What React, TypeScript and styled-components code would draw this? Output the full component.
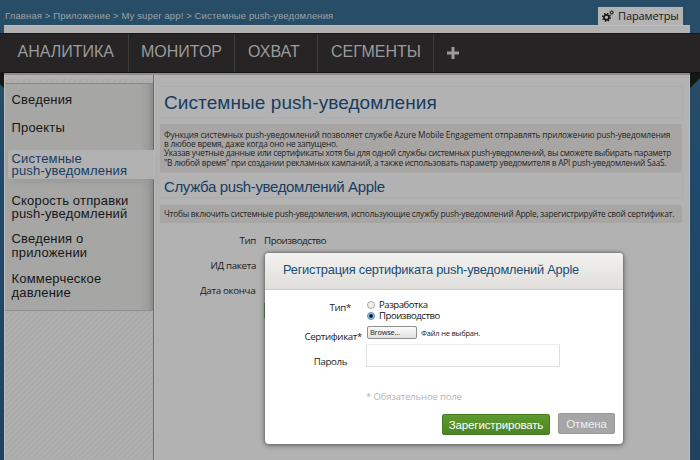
import React from 'react';
import styled, { createGlobalStyle, css } from 'styled-components';

const Global = createGlobalStyle`
  * { box-sizing: border-box; }
  html, body { margin: 0; padding: 0; }
  body { width: 700px; height: 460px; overflow: hidden; background: #284c67; }
`;

const sans = css`font-family: 'Liberation Sans', Arial, sans-serif;`;
const human = css`font-family: 'Open Sans', 'Noto Sans', sans-serif;`;
const hatch = css`
  background: repeating-linear-gradient(135deg, #afafaf 0 2px, #a6a6a6 3px, #afafaf 4px);
`;

const Page = styled.div`
  ${sans}
  position: relative;
  width: 700px;
  height: 460px;
  overflow: hidden;
  display: flex;
  flex-direction: column;
  background: linear-gradient(#284d67, #274c66 90px, #20496b 170px, #21425e);
`;

const TopBar = styled.header`
  height: 25px;
  flex: none;
  display: flex;
  justify-content: space-between;
  padding: 0 17px 0 5px;
`;

const Breadcrumb = styled.nav`
  padding-top: 10px;
  font-size: 9.5px;
  line-height: 12px;
  letter-spacing: 0.13px;
  color: #9aa3a8;
  white-space: nowrap;
`;

const SettingsTab = styled.div`
  ${human}
  display: flex;
  align-items: center;
  gap: 4px;
  width: 85px;
  height: 18px;
  margin-top: 7px;
  padding-left: 4px;
  background: #b3b3b3;
  color: #161616;
  font-size: 11px;
  line-height: 18px;
  letter-spacing: -0.1px;
  white-space: nowrap;
`;

const Strip = styled.div`
  height: 8px;
  flex: none;
  margin: 0 10px 0 4px;
  background: #b2b2b2;
  border-top: 1px solid #bdbdbd;
`;

const MainNav = styled.nav`
  display: flex;
  flex: none;
  height: 40px;
  background: #262425;
  border-top: 1px solid #1b1a1a;
  border-bottom: 1px solid #141414;
`;

const NavItem = styled.a<{ $width: number; $pad: number }>`
  width: ${p => p.$width}px;
  padding-left: ${p => p.$pad}px;
  border-right: 1px solid #3c3c3c;
  color: #9b9b9b;
  font-size: 16px;
  line-height: 36px;
  white-space: nowrap;
`;

const AddItem = styled.div`
  padding: 13px 0 0 13px;
  svg { display: block; }
`;

const Body = styled.div`
  flex: 1;
  display: flex;
`;

const LeftEdge = styled.div`
  width: 4px;
  flex: none;
  svg { display: block; }
`;
const RightEdge = styled.div`
  width: 10px;
  flex: none;
  svg { display: block; }
`;

const Sheet = styled.div`
  flex: 1;
  min-width: 0;
  display: flex;
  background: #b2b2b2;
  border-top: 2px solid #8d8d8d;
`;

const Sidebar = styled.aside`
  width: 150px;
  flex: none;
  padding-top: 4px;
  display: flex;
  flex-direction: column;
  border-left: 1px solid #bcbcba;
  border-right: 1px solid #6b6b6b;
`;

const HatchStrip = styled.div`
  height: 4px;
  ${hatch}
`;

const Menu = styled.ul`
  list-style: none;
  margin: 0;
  padding: 9px 0 0;
  height: 228px;
  background: linear-gradient(90deg, #a6a6a4 135px, #9d9d9b 143px, #8b8b8a);
  border-top: 1px solid #888;
  border-bottom: 1px solid #8e8e8e;
`;

const MenuItem = styled.li<{ $gap: number; $lead: number; $active?: boolean }>`
  position: relative;
  margin-top: ${p => p.$gap}px;
  padding-left: 6.5px;
  color: #171717;
  font-size: 13px;
  line-height: ${p => p.$lead}px;
  letter-spacing: 0.18px;
  white-space: pre;
  ${p => p.$active && css`
    margin-left: 3px;
    margin-right: -1px;
    padding: 3px 0 3px 3.5px;
    color: #173c61;
    background: #b1b1b1;
    border-radius: 3px 0 0 3px;
    box-shadow: 0 5px 10px -4px #919191;
  `}
`;

const HatchFill = styled.div`
  flex: 1;
  ${hatch}
`;

const Content = styled.main`
  flex: 1;
  min-width: 0;
  padding: 11px 6px 0 5px;
  border-left: 1px solid #bbb;
  border-right: 1px solid #bebebe;
`;

const Heading = styled.h1<{ $h: number; $size: number; $track: number; $lh: number }>`
  margin: 0;
  height: ${p => p.$h}px;
  padding-left: 4px;
  border: 1px solid #adadad;
  border-left: 0;
  font-weight: 400;
  font-size: ${p => p.$size}px;
  line-height: ${p => p.$lh}px;
  letter-spacing: ${p => p.$track}px;
  color: #163c62;
  white-space: nowrap;
`;

const Note = styled.div<{ $h: number; $top: number; $pad: number }>`
  ${human}
  height: ${p => p.$h}px;
  margin-top: ${p => p.$top}px;
  margin-right: 1px;
  padding: ${p => p.$pad}px 0 0 4px;
  background: #a7a6a5;
  color: #1f1f1f;
`;

const Line = styled.div<{ $track: number; $lh: number }>`
  font-size: 8.3px;
  line-height: ${p => p.$lh}px;
  letter-spacing: ${p => p.$track}px;
  white-space: nowrap;
`;

const Details = styled.dl`
  ${human}
  margin: 5px 0 0;
  display: grid;
  grid-template-columns: 96px 1fr;
  grid-auto-rows: 25px;
  column-gap: 8px;
  font-size: 9.7px;
  line-height: 25px;
  letter-spacing: -0.42px;
  color: #1a1a1a;
  white-space: nowrap;
  dd, dt { margin: 0; }
`;

const Term = styled.dt<{ $clip?: boolean }>`
  justify-self: end;
  overflow: hidden;
  letter-spacing: -0.3px;
  width: ${p => (p.$clip ? '56px' : 'auto')};
`;

const HiddenAction = styled.div`
  width: 60px;
  height: 15px;
  margin: 0 0 0 104px;
  background: #365f16;
`;

const Dialog = styled.section`
  ${human}
  position: absolute;
  left: 265px;
  top: 253px;
  width: 358px;
  height: 191px;
  border-radius: 4px;
  background: #fff;
  box-shadow: 0 0 2px 1px #6668, 0 1px 5px 1px #5559;
  color: #1c1c1c;
  white-space: nowrap;
`;

const DialogTitle = styled.h2`
  ${sans}
  margin: 0;
  height: 37px;
  padding-left: 18px;
  border-bottom: 1px solid #c9c9c9;
  border-radius: 4px 4px 0 0;
  background: linear-gradient(#f2f2f0, #dfdedb);
  color: #1b4c74;
  font-weight: 400;
  font-size: 12.8px;
  line-height: 34px;
  letter-spacing: -0.22px;
`;

const Form = styled.form`
  display: grid;
  grid-template-columns: 97px 1fr;
  grid-template-rows: 35px 19px 34px;
  column-gap: 5px;
`;

const Label = styled.label<{ $right: number; $top: number }>`
  justify-self: end;
  margin-right: ${p => p.$right}px;
  padding-top: ${p => p.$top}px;
  font-size: 9.7px;
  line-height: 13px;
  letter-spacing: -0.36px;
`;

const Options = styled.div`
  padding-top: 9px;
`;

const Option = styled.div`
  display: flex;
  align-items: center;
  gap: 4px;
  height: 11px;
  font-size: 9.5px;
  line-height: 11px;
  letter-spacing: -0.42px;
  color: #111;
`;

const Radio = styled.span<{ $on?: boolean }>`
  width: 8px;
  height: 8px;
  border-radius: 50%;
  border: 1px solid ${p => (p.$on ? '#5c86b4' : '#aaa')};
  background: ${p => (p.$on ? 'radial-gradient(#0b1d33 0 1.4px, #a3c8ea 2.4px)' : '#f0f0f0')};
`;

const FileRow = styled.div`
  display: flex;
  align-items: center;
  gap: 4px;
  height: 15px;
  font-size: 7.5px;
  letter-spacing: -0.2px;
`;

const Browse = styled.span`
  width: 50px;
  height: 13px;
  padding-left: 2px;
  border: 1px solid #8f8f8f;
  border-radius: 2px;
  background: linear-gradient(#fafafa, #e2e2e2);
  font-size: 7.4px;
  line-height: 11px;
`;

const Password = styled.div`
  width: 194px;
  height: 23px;
  margin: 0 0 0 -1px;
  border: 1px solid #e0e0e0;
  border-top-color: #eee;
`;

const Required = styled.p`
  margin: 12px 0 0 101px;
  font-size: 9.5px;
  line-height: 13px;
  letter-spacing: -0.15px;
  color: #b5b5b5;
`;

const Actions = styled.div`
  ${sans}
  display: flex;
  justify-content: flex-end;
  gap: 8px;
  margin: 10px 8px 0 0;
`;

const Button = styled.button<{ $primary?: boolean }>`
  ${sans}
  width: ${p => (p.$primary ? 108 : 57)}px;
  height: 21px;
  margin-top: ${p => (p.$primary ? 1 : 0)}px;
  padding: 1px 0 0;
  border: 1px solid ${p => (p.$primary ? '#467c21' : '#989898')};
  border-radius: 2px;
  background: ${p => (p.$primary ? 'linear-gradient(#5f9a2f, #4d8424)' : '#a6a6a6')};
  color: ${p => (p.$primary ? '#fff' : '#eee')};
  font-size: 11.5px;
  line-height: 18px;
  letter-spacing: -0.15px;
  white-space: nowrap;
`;

const Gears = () => (
  <svg width="12" height="12" viewBox="0 0 12 12" fill="none" stroke="#161616">
    <circle cx="4.5" cy="7.3" r="2.5" strokeWidth="1.7" />
    <circle cx="4.5" cy="7.3" r="3.8" strokeWidth="1.5" strokeDasharray="1.5 1.48" />
    <circle cx="9.7" cy="2.5" r="1.2" strokeWidth="1" />
    <circle cx="9.7" cy="2.5" r="1.9" strokeWidth="0.7" strokeDasharray="0.9 0.6" />
  </svg>
);

export default function App() {
  return (
    <>
      <Global />
      <Page>
        <TopBar>
          <Breadcrumb>Главная &gt; Приложение &gt; My super app! &gt; Системные push-уведомления</Breadcrumb>
          <SettingsTab><Gears />Параметры</SettingsTab>
        </TopBar>
        <Strip />
        <MainNav>
          <NavItem $width={129} $pad={17.5}>АНАЛИТИКА</NavItem>
          <NavItem $width={106} $pad={12}>МОНИТОР</NavItem>
          <NavItem $width={83} $pad={13}>ОХВАТ</NavItem>
          <NavItem $width={116} $pad={13}>СЕГМЕНТЫ</NavItem>
          <AddItem>
            <svg width="12" height="12"><path d="M6 0v12M0 6h12" stroke="#9b9b9b" strokeWidth="3" /></svg>
          </AddItem>
        </MainNav>
        <Body>
          <LeftEdge><svg width="4" height="15"><path d="M0 0h4v15L0 11z" fill="#151515" /></svg></LeftEdge>
          <Sheet>
            <Sidebar>
              <HatchStrip />
              <Menu>
                <MenuItem $gap={0} $lead={14}>Сведения</MenuItem>
                <MenuItem $gap={14} $lead={14}>Проекты</MenuItem>
                <MenuItem $gap={15} $lead={11.5} $active>{'Системные\npush-уведомления'}</MenuItem>
                <MenuItem $gap={15} $lead={13}>{'Скорость отправки\npush-уведомлений'}</MenuItem>
                <MenuItem $gap={12} $lead={14}>{'Сведения о\nприложении'}</MenuItem>
                <MenuItem $gap={12} $lead={14}>{'Коммерческое\nдавление'}</MenuItem>
              </Menu>
              <HatchFill />
            </Sidebar>
            <Content>
              <Heading $h={32} $size={19} $track={0.08} $lh={32}>Системные push-уведомления</Heading>
              <Note $h={48} $top={6} $pad={5.5}>
                <Line $lh={9} $track={-0.125}>Функция системных push-уведомлений позволяет службе Azure Mobile Engagement отправлять приложению push-уведомления</Line>
                <Line $lh={9.5} $track={-0.23}>в любое время, даже когда оно не запущено.</Line>
                <Line $lh={9.5} $track={-0.27}>Указав учетные данные или сертификаты хотя бы для одной службы системных push-уведомлений, вы сможете выбирать параметр</Line>
                <Line $lh={9} $track={-0.22}>"В любой время" при создании рекламных кампаний, а также использовать параметр уведомителя в API push-уведомлений SaaS.</Line>
              </Note>
              <Heading as="h2" $h={26} $size={15} $track={-0.36} $lh={28}>Служба push-уведомлений Apple</Heading>
              <Note $h={18} $top={7} $pad={4}>
                <Line $lh={10} $track={-0.22}>Чтобы включить системные push-уведомления, использующие службу push-уведомлений Apple, зарегистрируйте свой сертификат.</Line>
              </Note>
              <Details>
                <Term>Тип</Term><dd>Производство</dd>
                <Term>ИД пакета</Term><dd />
                <Term $clip>Дата окончания</Term><dd />
              </Details>
              <HiddenAction />
            </Content>
          </Sheet>
          <RightEdge><svg width="10" height="15"><path d="M0 0h10v5L0 15z" fill="#151515" /></svg></RightEdge>
        </Body>
        <Dialog>
          <DialogTitle>Регистрация сертификата push-уведомлений Apple</DialogTitle>
          <Form>
            <Label $right={11} $top={11}>Тип*</Label>
            <Options>
              <Option><Radio />Разработка</Option>
              <Option><Radio $on />Производство</Option>
            </Options>
            <Label $right={0} $top={5}>Сертификат*</Label>
            <FileRow><Browse>Browse...</Browse>Файл не выбран.</FileRow>
            <Label $right={15} $top={11}>Пароль</Label>
            <Password />
          </Form>
          <Required>* Обязательное поле</Required>
          <Actions>
            <Button type="button" $primary>Зарегистрировать</Button>
            <Button type="button">Отмена</Button>
          </Actions>
        </Dialog>
      </Page>
    </>
  );
}
